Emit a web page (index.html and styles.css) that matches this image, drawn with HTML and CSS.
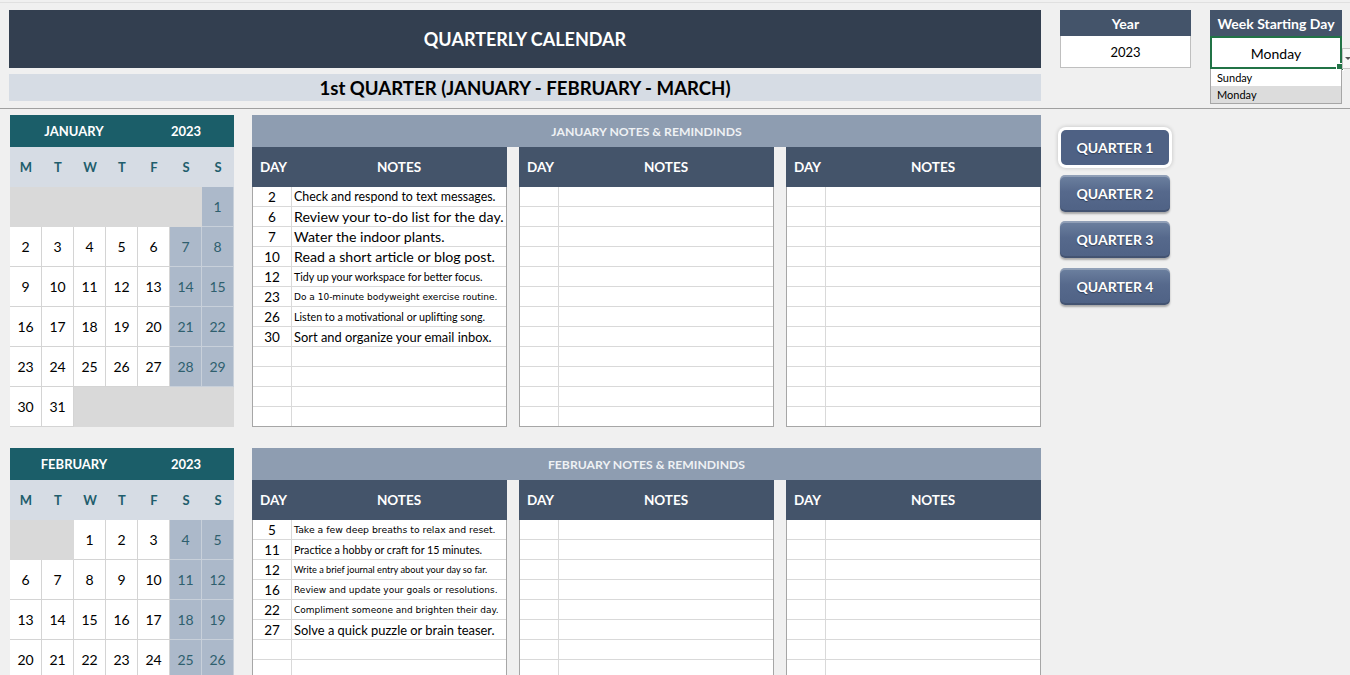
FILE: index.html
```html
<!DOCTYPE html>
<html lang="en">
<head>
  <meta charset="UTF-8" />
  <meta name="viewport" content="width=device-width, initial-scale=1.0" />
  <title>Quarterly Calendar</title>
  <link rel="stylesheet" href="styles.css">
</head>
<body>

<div class="top">
  <div class="titles">
    <div class="title">QUARTERLY CALENDAR</div>
    <div class="subtitle">1st QUARTER (JANUARY - FEBRUARY - MARCH)</div>
  </div>

  <div class="setting">
    <div class="setting-head">Year</div>
    <div class="setting-value">2023</div>
  </div>

  <div class="setting week">
    <div class="setting-head">Week Starting Day</div>
    <div class="setting-value selected">Monday</div>
    <div class="drop-arrow"></div>
    <ul class="drop-list">
      <li>Sunday</li>
      <li class="hover">Monday</li>
    </ul>
  </div>
</div>

<div class="divider"></div>

<div class="main">
  <div class="months" id="months"></div>

  <div class="quarters">
    <button class="qbtn active">QUARTER 1</button>
    <button class="qbtn">QUARTER 2</button>
    <button class="qbtn">QUARTER 3</button>
    <button class="qbtn">QUARTER 4</button>
  </div>
</div>

<script>
  // Month data (week starts on Monday, offset = blank cells before day 1)
  const months = [
    {
      name: 'JANUARY', offset: 6, days: 31,
      notes: [
        [2, 'Check and respond to text messages.', 'f-12'],
        [6, 'Review your to-do list for the day.', 'f-14'],
        [7, 'Water the indoor plants.', 'f-14'],
        [10, 'Read a short article or blog post.', 'f-14'],
        [12, 'Tidy up your workspace for better focus.', 'f-10'],
        [23, 'Do a 10-minute bodyweight exercise routine.', 'f-tah'],
        [26, 'Listen to a motivational or uplifting song.', 'f-10'],
        [30, 'Sort and organize your email inbox.', 'f-13']
      ]
    },
    {
      name: 'FEBRUARY', offset: 2, days: 28,
      notes: [
        [5, 'Take a few deep breaths to relax and reset.', 'f-tah wide'],
        [11, 'Practice a hobby or craft for 15 minutes.', 'f-10'],
        [12, 'Write a brief journal entry about your day so far.', 'f-9'],
        [16, 'Review and update your goals or resolutions.', 'f-tah'],
        [22, 'Compliment someone and brighten their day.', 'f-tah'],
        [27, 'Solve a quick puzzle or brain teaser.', 'f-13']
      ]
    },
    {
      name: 'MARCH', offset: 2, days: 31,
      notes: []
    }
  ];

  const ROWS = 12;

  function calendarHtml(m) {
    let html = '<div class="cal"><div class="cal-head"><span>' + m.name + '</span><span>2023</span></div><div class="cal-grid">';
    ['M', 'T', 'W', 'T', 'F', 'S', 'S'].forEach(d => {
      html += '<div class="dow">' + d + '</div>';
    });
    for (let i = 0; i < 42; i++) {
      const day = i - m.offset + 1;
      const col = i % 7;
      if (day < 1 || day > m.days) {
        html += '<div class="day empty"></div>';
      } else {
        const cls = col >= 5 ? 'day we' : 'day';
        html += '<div class="' + cls + '">' + day + '</div>';
      }
    }
    return html + '</div></div>';
  }

  function tableHtml(notes) {
    let html = '<div class="ntable"><div class="ntable-head"><span>DAY</span><span>NOTES</span></div>';
    for (let i = 0; i < ROWS; i++) {
      const n = notes[i];
      html += '<div class="nrow"><div class="nday">' + (n ? n[0] : '') + '</div>' +
              '<div class="ntext ' + (n ? n[2] : '') + '">' + (n ? n[1] : '') + '</div></div>';
    }
    return html + '</div>';
  }

  const container = document.getElementById('months');
  months.forEach(m => {
    container.innerHTML +=
      '<section class="month">' + calendarHtml(m) +
      '<div class="notes"><div class="notes-head">' + m.name + ' NOTES &amp; REMINDINDS</div>' +
      '<div class="notes-tables">' + tableHtml(m.notes) + tableHtml([]) + tableHtml([]) + '</div></div>' +
      '</section>';
  });
</script>

</body>
</html>
```

FILE: styles.css
```css
* {
  box-sizing: border-box;
}

body {
  margin: 0;
  padding: 0;
  background: #f0f0f0;
  font-family: Lato, 'Liberation Sans', sans-serif;
  color: #000;
  overflow: hidden;
}

.top {
  display: flex;
  align-items: flex-start;
  margin-top: 2px;
  border-top: 1px solid #e0e0e0;
  padding: 7px 0 0 9px;
}

.titles {
  width: 1032px;
}

.title {
  height: 58px;
  background: #333f50;
  color: #fff;
  font-weight: 700;
  font-size: 18px;
  display: flex;
  align-items: center;
  justify-content: center;
}

.subtitle {
  margin-top: 6px;
  height: 27px;
  background: #d6dce4;
  font-weight: 700;
  font-size: 18.6px;
  display: flex;
  align-items: center;
  justify-content: center;
}

.setting {
  position: relative;
  margin-left: 19px;
  width: 131px;
}

.setting.week {
  width: 132px;
}

.setting-head {
  height: 26px;
  background: #44546a;
  color: #fff;
  font-weight: 700;
  font-size: 14px;
  display: flex;
  align-items: center;
  justify-content: center;
}

.setting-value {
  height: 32px;
  background: #fff;
  border: 1px solid #bfbfbf;
  border-top: none;
  font-size: 13px;
  padding-top: 1px;
  display: flex;
  align-items: center;
  justify-content: center;
}

.setting-value.selected {
  position: relative;
  height: 33px;
  border: 2px solid #217346;
  font-size: 14px;
}

.setting-value.selected::after {
  content: '';
  position: absolute;
  right: -4px;
  bottom: -4px;
  width: 6px;
  height: 6px;
  background: #217346;
  border: 1px solid #fff;
}

.drop-arrow {
  position: absolute;
  left: 100%;
  top: 38px;
  width: 14px;
  height: 21px;
  background: #f7f7f7;
  border: 1px solid #c6c6c6;
}

.drop-arrow::after {
  content: '';
  position: absolute;
  left: 2px;
  top: 8px;
  border-left: 3px solid transparent;
  border-right: 3px solid transparent;
  border-top: 3px solid #555;
}

.drop-list {
  position: absolute;
  top: 59px;
  left: 0;
  width: 100%;
  margin: 0;
  padding: 0;
  list-style: none;
  background: #fff;
  border: 1px solid #a6a6a6;
  border-top: none;
  font-size: 11px;
}

.drop-list li {
  height: 17px;
  line-height: 18px;
  padding-left: 6px;
}

.drop-list li.hover {
  background: #dcdcdc;
}

.divider {
  margin-top: 7px;
  height: 1px;
  background: #a0a0a0;
}

.main {
  display: flex;
  align-items: flex-start;
  padding-top: 6px;
}

.months {
  padding-left: 10px;
}

.month {
  display: flex;
  align-items: flex-start;
  gap: 18px;
  margin-bottom: 21px;
}

/* calendar */
.cal {
  width: 224px;
}

.cal-head {
  height: 32px;
  background: #1b5e69;
  color: #fff;
  font-weight: 700;
  font-size: 13px;
  display: grid;
  grid-template-columns: 128px 96px;
  align-items: center;
  text-align: center;
}

.cal-grid {
  display: grid;
  grid-template-columns: repeat(7, 32px);
  grid-auto-rows: 40px;
}

.dow {
  background: #d6dce4;
  color: #1f5e6c;
  font-weight: 700;
  font-size: 13px;
  display: flex;
  align-items: center;
  justify-content: center;
}

.day {
  background: #fff;
  border-right: 1px solid #d4d4d4;
  border-bottom: 1px solid #d4d4d4;
  font-size: 14px;
  display: flex;
  align-items: center;
  justify-content: center;
}

.day.we {
  background: #acb9ca;
  color: #2f5f6e;
  border-color: #c8d0da;
}

.day.empty {
  background: #d9d9d9;
  border-color: #d9d9d9;
}

/* notes */
.notes {
  width: 789px;
}

.notes-head {
  height: 32px;
  background: #8e9db1;
  color: #eef1f4;
  font-weight: 700;
  font-size: 12.2px;
  display: flex;
  align-items: center;
  justify-content: center;
}

.notes-tables {
  display: grid;
  grid-template-columns: repeat(3, 1fr);
  gap: 12px;
}

.ntable {
  background: #fff;
  border: 1px solid #a6a6a6;
  border-top: none;
  border-bottom: none;
}

.ntable-head {
  height: 40px;
  background: #44546a;
  color: #fff;
  font-weight: 700;
  font-size: 13.5px;
  display: grid;
  grid-template-columns: 39px 1fr;
  align-items: center;
  margin: 0 -1px;
}

.ntable-head span:first-child {
  padding-left: 8px;
}

.ntable-head span:last-child {
  text-align: center;
}

.nrow {
  display: grid;
  grid-template-columns: 39px 1fr;
  height: 20px;
  border-bottom: 1px solid #d9d9d9;
}

.nrow:last-child {
  border-bottom-color: #a6a6a6;
}

.nday {
  border-right: 1px solid #d9d9d9;
  text-align: center;
  font-size: 13.5px;
  line-height: 20px;
}

.ntext {
  padding-left: 2px;
  white-space: nowrap;
  overflow: hidden;
  line-height: 20px;
}

.f-14 {
  font-size: 14.2px;
}

.f-13 {
  font-size: 12.9px;
}

.f-12 {
  font-size: 12.4px;
}

.f-10 {
  font-size: 10.7px;
}

.f-9 {
  font-size: 9.2px;
}

.f-tah {
  font-family: 'DejaVu Sans', sans-serif;
  font-size: 9px;
}

.f-tah.wide {
  font-size: 9.3px;
}

/* quarter buttons */
.quarters {
  display: flex;
  flex-direction: column;
  gap: 9.5px;
  margin-left: 19px;
  padding-top: 14px;
}

.qbtn {
  width: 110px;
  height: 37px;
  border: none;
  border-radius: 5px;
  background: linear-gradient(#6d81a0, #56698c 45%, #4f6285);
  color: #fff;
  font-family: Lato, 'Liberation Sans', sans-serif;
  font-weight: 700;
  font-size: 14px;
  text-shadow: 0 1px 1px rgba(0, 0, 0, 0.4);
  box-shadow: inset 0 2px 0 rgba(255, 255, 255, 0.25), inset 0 -2px 0 rgba(0, 0, 0, 0.15), 0 2px 2px rgba(0, 0, 0, 0.3);
  cursor: pointer;
}

.qbtn.active {
  width: 108px;
  height: 35px;
  margin: 1px 1px 0;
  background: #4e6184;
  box-shadow: 0 0 0 3px #fff, 0 0 4px 3px rgba(0, 0, 0, 0.2);
}
```
